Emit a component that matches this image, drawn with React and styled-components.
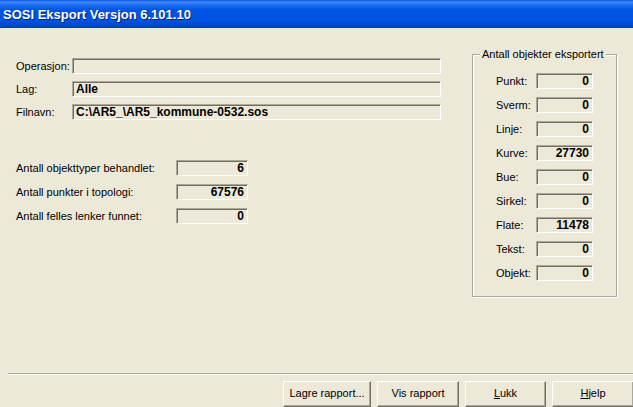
import React from "react";
import styled, { createGlobalStyle } from "styled-components";

const Global = createGlobalStyle`
  html, body { margin: 0; padding: 0; background: #ECE9D8; }
  body { font-family: "Liberation Sans", Arial, sans-serif; }
`;

const Window = styled.div`
  width: 633px;
  height: 407px;
  background: #ECE9D8;
  display: flex;
  flex-direction: column;
  overflow: hidden;
  font-family: "Liberation Sans", Arial, sans-serif;
  font-size: 11px;
  color: #000;
`;

const TitleBar = styled.div`
  height: 28px;
  flex: none;
  display: flex;
  align-items: center;
  padding-left: 3px;
  background: linear-gradient(
    to bottom,
    #0A5AE8 0px,
    #3D8AF7 2px,
    #1D6CF0 5px,
    #0054E3 10px,
    #0054E3 20px,
    #0048D0 25px,
    #003BB5 28px
  );
`;

const Title = styled.span`
  color: #fff;
  font-weight: bold;
  font-size: 13px;
  text-shadow: 1px 1px 0 #0A246A;
  letter-spacing: 0px;
`;

const Body = styled.div`
  flex: 1;
  display: flex;
  min-height: 0;
`;

const LeftPane = styled.div`
  width: 425px;
  padding: 30px 0 0 16px;
  display: flex;
  flex-direction: column;
`;

const FieldList = styled.div`
  display: flex;
  flex-direction: column;
  gap: 7px;
`;

const StatList = styled.div`
  display: flex;
  flex-direction: column;
  gap: 8px;
  margin-top: 40px;
`;

const Row = styled.div`
  display: flex;
  align-items: center;
  height: 16px;
`;

const Label = styled.div`
  width: ${(p) => p.$w}px;
  flex: none;
  white-space: nowrap;
  line-height: 16px;
`;

const Field = styled.div`
  box-sizing: border-box;
  width: ${(p) => p.$w}px;
  height: 16px;
  flex: none;
  border-top: 1px solid #ACA899;
  border-left: 1px solid #ACA899;
  border-right: 1px solid #FFFFFF;
  border-bottom: 1px solid #FFFFFF;
  box-shadow: inset 1px 1px 0 #716F64;
  background: #ECE9D8;
  font-weight: bold;
  font-size: 12px;
  line-height: 14px;
  padding: 0 ${(p) => (p.$right ? 3 : 2)}px 0 3px;
  text-align: ${(p) => (p.$right ? "right" : "left")};
  white-space: nowrap;
  overflow: hidden;
`;

const GroupBox = styled.div`
  position: relative;
  box-sizing: border-box;
  margin: 26px 0 0 31px;
  width: 145px;
  height: 243px;
  border: 1px solid #ACA899;
  box-shadow: inset 1px 1px 0 #fff, 1px 1px 0 #fff;
  padding: 18px 0 0 23px;
  display: flex;
  flex-direction: column;
  gap: 8px;
`;

const Legend = styled.div`
  position: absolute;
  top: -8px;
  left: 7px;
  padding: 0 2px;
  background: #ECE9D8;
  line-height: 14px;
  white-space: nowrap;
`;

const Footer = styled.div`
  flex: none;
  display: flex;
  flex-direction: column;
`;

const Separator = styled.div`
  margin-left: 8px;
  height: 1px;
  background: #ACA899;
  border-bottom: 1px solid #fff;
`;

const ButtonRow = styled.div`
  display: flex;
  justify-content: flex-end;
  gap: 6px;
  padding-top: 6px;
  margin-right: -1px;
  height: 26px;
`;

const Button = styled.div`
  box-sizing: border-box;
  width: ${(p) => p.$w}px;
  height: 26px;
  flex: none;
  border-top: 1px solid #fff;
  border-left: 1px solid #fff;
  border-right: 1px solid #716F64;
  border-bottom: 1px solid #716F64;
  box-shadow: inset -1px -1px 0 #ACA899;
  background: #ECE9D8;
  display: flex;
  justify-content: center;
  padding-top: 4px;
  line-height: 14px;
  font-size: 11px;
`;

const U = styled.span`
  text-decoration: underline;
`;

const fields = [
  ["Operasjon:", ""],
  ["Lag:", "Alle"],
  ["Filnavn:", "C:\\AR5_\\AR5_kommune-0532.sos"],
];

const stats = [
  ["Antall objekttyper behandlet:", "6"],
  ["Antall punkter i topologi:", "67576"],
  ["Antall felles lenker funnet:", "0"],
];

const exported = [
  ["Punkt:", "0"],
  ["Sverm:", "0"],
  ["Linje:", "0"],
  ["Kurve:", "27730"],
  ["Bue:", "0"],
  ["Sirkel:", "0"],
  ["Flate:", "11478"],
  ["Tekst:", "0"],
  ["Objekt:", "0"],
];

export default function App() {
  return (
    <>
      <Global />
      <Window>
        <TitleBar>
          <Title>SOSI Eksport Versjon 6.101.10</Title>
        </TitleBar>
        <Body>
          <LeftPane>
            <FieldList>
              {fields.map(([l, v]) => (
                <Row key={l}>
                  <Label $w={56}>{l}</Label>
                  <Field $w={369}>{v}</Field>
                </Row>
              ))}
            </FieldList>
            <StatList>
              {stats.map(([l, v]) => (
                <Row key={l}>
                  <Label $w={160}>{l}</Label>
                  <Field $w={72} $right>
                    {v}
                  </Field>
                </Row>
              ))}
            </StatList>
          </LeftPane>
          <GroupBox>
            <Legend>Antall objekter eksportert</Legend>
            {exported.map(([l, v]) => (
              <Row key={l}>
                <Label $w={40}>{l}</Label>
                <Field $w={57} $right>
                  {v}
                </Field>
              </Row>
            ))}
          </GroupBox>
        </Body>
        <Footer>
          <Separator />
          <ButtonRow>
            <Button $w={88}>Lagre rapport...</Button>
            <Button $w={82}>Vis rapport</Button>
            <Button $w={81}>
              <span>
                <U>L</U>ukk
              </span>
            </Button>
            <Button $w={82}>
              <span>
                <U>H</U>jelp
              </span>
            </Button>
          </ButtonRow>
        </Footer>
      </Window>
    </>
  );
}
